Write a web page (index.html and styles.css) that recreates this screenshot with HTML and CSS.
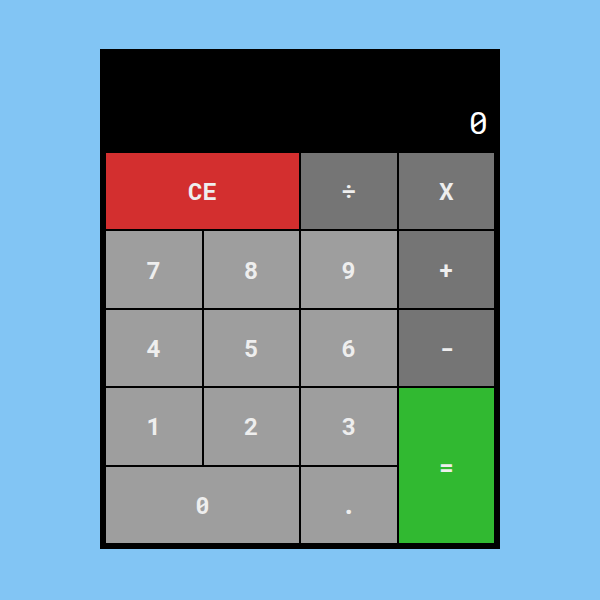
FILE: index.html
```html
<!DOCTYPE html>
<html>
<head>
<meta charset="utf-8">
<link rel="stylesheet" href="styles.css">
</head>
<body>
<div class="calc">
  <div class="display">0</div>
  <div class="keys">
    <button class="key wide clear">CE</button>
    <button class="key op">÷</button>
    <button class="key op">X</button>
    <button class="key">7</button>
    <button class="key">8</button>
    <button class="key">9</button>
    <button class="key op">+</button>
    <button class="key">4</button>
    <button class="key">5</button>
    <button class="key">6</button>
    <button class="key op">-</button>
    <button class="key">1</button>
    <button class="key">2</button>
    <button class="key">3</button>
    <button class="key tall equals">=</button>
    <button class="key wide">0</button>
    <button class="key">.</button>
  </div>
</div>
</body>
</html>
```
FILE: styles.css
```css
html, body {
  margin: 0;
  padding: 0;
}
body {
  background: #82c5f4;
  height: 600px;
  font-family: "Roboto Mono", "DejaVu Sans Mono", monospace;
}
.calc {
  width: 400px;
  height: 500px;
  box-sizing: border-box;
  margin: 49px auto 0;
  background: #000;
  padding: 0 6px 6px;
  display: flex;
  flex-direction: column;
}
.display {
  height: 104px;
  display: flex;
  align-items: flex-end;
  justify-content: flex-end;
  color: #fff;
  font-size: 32px;
  line-height: 1;
  padding: 0 6px 15px 0;
  box-sizing: border-box;
}
.keys {
  flex: 1;
  display: grid;
  grid-template-columns: repeat(4, 1fr);
  grid-template-rows: repeat(5, 1fr);
  gap: 2px;
}
.key {
  border: 0;
  margin: 0;
  padding: 0;
  background: #9e9e9e;
  color: #eeeeee;
  font-family: "Roboto Mono", "DejaVu Sans Mono", monospace;
  font-size: 24px;
  font-weight: 700;
}
.op {
  background: #757575;
}
.clear {
  background: #d32f2f;
}
.equals {
  background: #31b931;
}
.wide {
  grid-column: span 2;
}
.tall {
  grid-row: span 2;
}
```
